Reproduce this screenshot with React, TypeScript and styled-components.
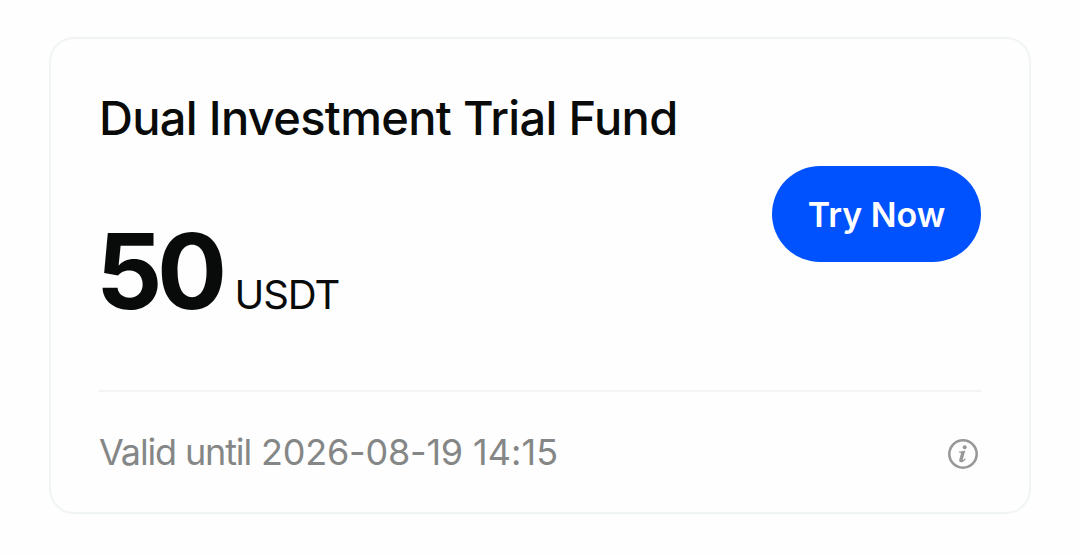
import styled, { createGlobalStyle } from "styled-components";

const GlobalStyle = createGlobalStyle`
  * {
    box-sizing: border-box;
  }
  body {
    margin: 0;
    background: #fefefe;
    font-family: Inter, "Liberation Sans", sans-serif;
  }
`;

const Page = styled.main`
  width: 1080px;
  height: 555px;
  padding: 37px 49px 41px;
`;

const Card = styled.section`
  display: flex;
  flex-direction: column;
  width: 982px;
  height: 477px;
  padding: 0 48px;
  border: 2px solid #f1f4f4;
  border-radius: 25px;
`;

const Main = styled.div`
  display: flex;
  justify-content: space-between;
  align-items: center;
  height: 353px;
  border-bottom: 2px solid #f3f4f4;
`;

const Offer = styled.div`
  display: flex;
  flex-direction: column;
  height: 351px;
  padding-top: 49px;
  color: #090b0b;
`;

const Text = styled.span<{ $size: number; $weight?: number; $spacing?: number }>`
  font-size: ${({ $size }) => $size}px;
  font-weight: ${({ $weight }) => $weight ?? 400};
  letter-spacing: ${({ $spacing }) => $spacing ?? 0}px;
  line-height: 60px;
  white-space: nowrap;
`;

const Amount = styled.div`
  display: flex;
  align-items: baseline;
  gap: 13px;
  margin-top: 93px;
  margin-left: -3px;
`;

const Button = styled.button`
  width: 209px;
  height: 96px;
  margin-bottom: 1px;
  padding: 0;
  border: 0;
  border-radius: 48px;
  background: #0052ff;
  color: #fff;
  font: 600 34px Inter, "Liberation Sans", sans-serif;
`;

const Footer = styled.footer`
  display: flex;
  justify-content: space-between;
  align-items: center;
  height: 120px;
  color: #858787;
`;

const Validity = styled.div`
  display: flex;
  gap: 10px;
`;

const Icon = styled.svg`
  margin: 4px 2px 0 0;
`;

const InfoIcon = () => (
  <Icon width="32" height="32" viewBox="0 0 32 32" fill="none">
    <circle cx="16" cy="16" r="13.7" stroke="#979999" strokeWidth="2.6" />
    <circle cx="17.7" cy="9.2" r="2" fill="#979999" />
    <path
      d="M12 13.5c2.1-.2 4-.6 6.3-1.1l-2.5 9c-.2.9.5.8 2.4-1.1l.6.6c-1.6 2.3-3.1 3.4-4.7 3.4-1.7 0-2.2-1.1-1.8-2.7l1.6-5.8c.2-.9 0-1.1-2.1-1.2z"
      fill="#979999"
    />
  </Icon>
);

const App = () => {
  return (
    <Page>
      <GlobalStyle />
      <Card>
        <Main>
          <Offer>
            <Text $size={47} $weight={500} $spacing={-0.68}>
              Dual Investment Trial Fund
            </Text>
            <Amount>
              <Text $size={104} $weight={700} $spacing={-5.5}>
                50
              </Text>
              <Text $size={40} $spacing={-1.1}>
                USDT
              </Text>
            </Amount>
          </Offer>
          <Button>Try Now</Button>
        </Main>
        <Footer>
          <Validity>
            <Text $size={36} $spacing={-1.15}>
              Valid until
            </Text>
            <Text $size={36} $spacing={-0.2}>
              2026-08-19
            </Text>
            <Text $size={36} $spacing={0.1}>
              14:15
            </Text>
          </Validity>
          <InfoIcon />
        </Footer>
      </Card>
    </Page>
  );
};

export default App;
